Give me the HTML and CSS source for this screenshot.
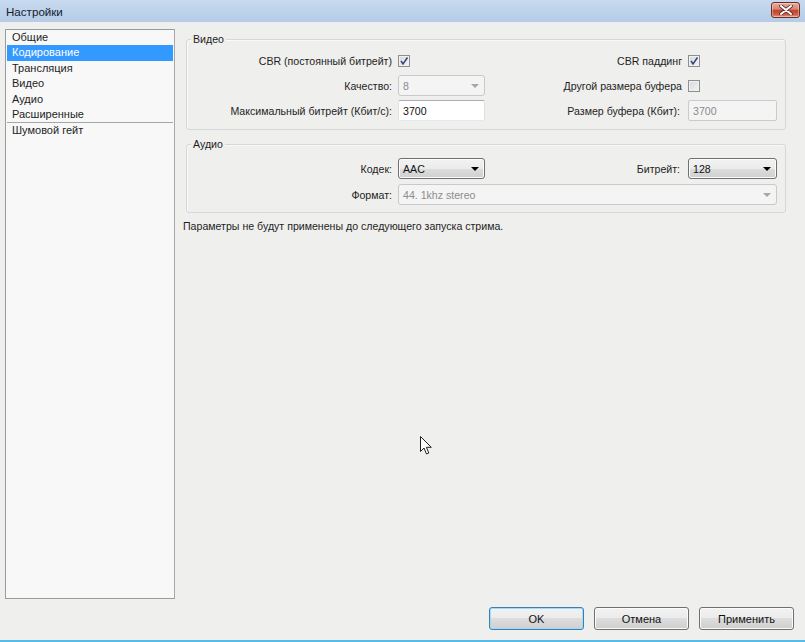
FILE: index.html
```html
<!DOCTYPE html>
<html lang="ru">
<head>
<meta charset="utf-8">
<title>Настройки</title>
<link rel="stylesheet" href="styles.css">
</head>
<body>
<div class="window">
  <div class="titlebar">
    <span class="title">Настройки</span>
    <span class="close">
      <svg width="14" height="10" viewBox="0 0 14 10"><path d="M2 1 L12 9 M12 1 L2 9" fill="none" stroke="#5a2a2a" stroke-width="3.6" stroke-linecap="round"/><path d="M2 1 L12 9 M12 1 L2 9" fill="none" stroke="#ffffff" stroke-width="2" stroke-linecap="round"/></svg>
    </span>
  </div>
  <div class="main">
    <ul class="nav">
      <li class="nav-item">Общие</li>
      <li class="nav-item selected">Кодирование</li>
      <li class="nav-item">Трансляция</li>
      <li class="nav-item">Видео</li>
      <li class="nav-item">Аудио</li>
      <li class="nav-item">Расширенные</li>
      <li class="nav-item nav-sep">Шумовой гейт</li>
    </ul>
    <div class="pane">
      <div class="group group-video">
        <span class="group-title">Видео</span>
        <div class="form-grid">
          <span class="lbl">CBR (постоянный битрейт)</span>
          <span class="cell"><span class="chk"><svg width="10" height="10" viewBox="0 0 10 10"><path d="M2 5 L4 8 L8.5 1.5" fill="none" stroke="#33457e" stroke-width="1.5"/></svg></span></span>
          <span class="lbl">CBR паддинг</span>
          <span class="cell"><span class="chk"><svg width="10" height="10" viewBox="0 0 10 10"><path d="M2 5 L4 8 L8.5 1.5" fill="none" stroke="#33457e" stroke-width="1.5"/></svg></span></span>

          <span class="lbl">Качество:</span>
          <span class="combo disabled"><span class="combo-text">8</span><span class="arrow"></span></span>
          <span class="lbl">Другой размера буфера</span>
          <span class="cell"><span class="chk"></span></span>

          <span class="lbl">Максимальный битрейт (Кбит/с):</span>
          <span class="input">3700</span>
          <span class="lbl lbl-wide">Размер буфера (Кбит):</span>
          <span class="input disabled">3700</span>
        </div>
      </div>
      <div class="group group-audio">
        <span class="group-title">Аудио</span>
        <div class="form-grid">
          <span class="lbl">Кодек:</span>
          <span class="combo"><span class="combo-text">AAC</span><span class="arrow"></span></span>
          <span class="lbl lbl-wide">Битрейт:</span>
          <span class="combo"><span class="combo-text">128</span><span class="arrow"></span></span>

          <span class="lbl">Формат:</span>
          <span class="combo disabled span3"><span class="combo-text">44. 1khz stereo</span><span class="arrow"></span></span>
        </div>
      </div>
      <p class="note">Параметры не будут применены до следующего запуска стрима.</p>
    </div>
  </div>
  <div class="footer">
    <span class="btn btn-default">OK</span>
    <span class="btn">Отмена</span>
    <span class="btn">Применить</span>
  </div>
  <svg class="cursor" width="13" height="20" viewBox="0 0 13 20"><path d="M0.5 0.5 L0.5 15.5 L4 12 L6.5 18 L8.8 17 L6.4 11.3 L11.3 11.3 Z" fill="#ffffff" stroke="#222" stroke-width="1" stroke-linejoin="round"/></svg>
</div>
</body>
</html>
```

FILE: styles.css
```css
* { box-sizing: border-box; }

html, body {
  margin: 0;
  padding: 0;
  background: #efefed;
}

body {
  font-family: "Liberation Sans", Arial, sans-serif;
  font-size: 10.6px;
  color: #1e1e1e;
}

.window {
  position: relative;
  width: 805px;
  height: 642px;
  display: flex;
  flex-direction: column;
  background: #efefed;
  border-bottom: 2px solid #55bbe8;
  overflow: hidden;
}

/* title bar */
.titlebar {
  height: 22px;
  flex: none;
  display: flex;
  align-items: center;
  justify-content: space-between;
  padding: 0 5px 0 6px;
  background: linear-gradient(#c8daf0, #bcd1ea 60%, #b6cbe6);
}

.title {
  font-size: 11.6px;
  color: #15202e;
}

.close {
  width: 29px;
  height: 16px;
  margin-top: -3px;
  display: flex;
  align-items: center;
  justify-content: center;
  border: 1px solid #6e2b27;
  border-radius: 3px;
  background: linear-gradient(#e7ab9c, #d88672 45%, #c0412c 50%, #cc5a3e 80%, #de9a7f);
  box-shadow: inset 0 0 0 1px rgba(255,255,255,0.35);
}

/* main area */
.main {
  height: 577px;
  flex: none;
  display: flex;
  gap: 8px;
  padding: 7px 0 0 5px;
}

.nav {
  list-style: none;
  margin: 0;
  padding: 0 1px;
  width: 170px;
  height: 570px;
  background: #f8f8f8;
  border: 1px solid #9b9b9b;
  border-right-color: #a8a8a8;
  font-size: 11px;
}

.nav-item {
  height: 15.4px;
  line-height: 15.4px;
  padding-left: 5px;
  white-space: nowrap;
}

.nav-item.selected {
  background: #3399ff;
  color: #ffffff;
}

.nav-item.nav-sep {
  border-top: 1px solid #a6a6a6;
  height: 16px;
  line-height: 15px;
}

.pane {
  display: flex;
  flex-direction: column;
}

.group {
  position: relative;
  width: 600px;
  margin-left: 3px;
  border: 1px solid #d2d8dc;
  border-radius: 3px;
  box-shadow: inset 1px 1px 0 #fafafa;
}

.group-video {
  margin-top: 10px;
  padding: 10px 8px 8px 0;
}

.group-audio {
  margin-top: 14px;
  padding: 13px 8px 7px 0;
}

.group-title {
  position: absolute;
  top: -8px;
  left: 4px;
  padding: 0 2px;
  line-height: 15px;
  background: #efefed;
  color: #1e1e1e;
}

.form-grid {
  display: grid;
  grid-template-columns: 211px 87px 203px 89px;
  grid-auto-rows: 21px;
  row-gap: 4px;
}

.group-audio .form-grid {
  row-gap: 5px;
}

.lbl {
  align-self: center;
  justify-self: end;
  padding-right: 6px;
  white-space: nowrap;
}

.lbl-wide {
  padding-right: 8px;
}

.cell {
  display: flex;
  align-items: center;
}

.chk {
  width: 12px;
  height: 12px;
  display: flex;
  align-items: center;
  justify-content: center;
  border: 1px solid #8e8f8f;
  background: linear-gradient(135deg, #d6d8de, #f4f4f6);
  box-shadow: inset 0 0 0 1px #f0f0f2;
}

.input {
  height: 21px;
  display: flex;
  align-items: center;
  padding-left: 4px;
  background: #ffffff;
  border: 1px solid #abadb3;
  border-left-color: #e2e3ea;
  border-right-color: #dbdfe6;
  border-bottom-color: #e3e9ef;
  border-radius: 2px;
  color: #111;
}

.input.disabled {
  background: #f4f4f4;
  border: 1px solid #cbcbcb;
  color: #8a8a8a;
}

.combo {
  position: relative;
  height: 21px;
  display: flex;
  align-items: center;
  justify-content: space-between;
  padding: 0 5px 0 4px;
  border: 1px solid #707070;
  border-radius: 3px;
  background: linear-gradient(#f2f2f2, #ebebeb 50%, #dddddd 50%, #cfcfcf);
  box-shadow: inset 0 0 0 1px #fcfcfc;
  color: #111;
}

.combo.disabled {
  background: #f4f4f4;
  border-color: #c9c9c9;
  box-shadow: none;
  color: #8d8d8d;
}

.span3 {
  grid-column: 2 / span 3;
}

.arrow {
  width: 0;
  height: 0;
  border-left: 4px solid transparent;
  border-right: 4px solid transparent;
  border-top: 4px solid #000;
}

.combo.disabled .arrow {
  border-top-color: #a6a6a6;
}

.note {
  margin: 7px 0 0 0;
  line-height: 13px;
  white-space: nowrap;
}

/* footer */
.footer {
  flex: 1;
  display: flex;
  justify-content: flex-end;
  align-items: flex-start;
  gap: 10px;
  padding: 8px 11px 0 0;
}

.btn {
  width: 95px;
  height: 23px;
  display: flex;
  align-items: center;
  justify-content: center;
  border: 1px solid #707070;
  border-radius: 3px;
  background: linear-gradient(#f2f2f2, #ebebeb 50%, #dddddd 50%, #cfcfcf);
  box-shadow: inset 0 0 0 1px #fbfbfb;
  color: #111;
  font-size: 11px;
}

.btn-default {
  border-color: #3c7fb1;
  box-shadow: inset 0 0 0 1px #9edcf7;
}

.cursor {
  position: absolute;
  left: 420px;
  top: 436px;
}
```
